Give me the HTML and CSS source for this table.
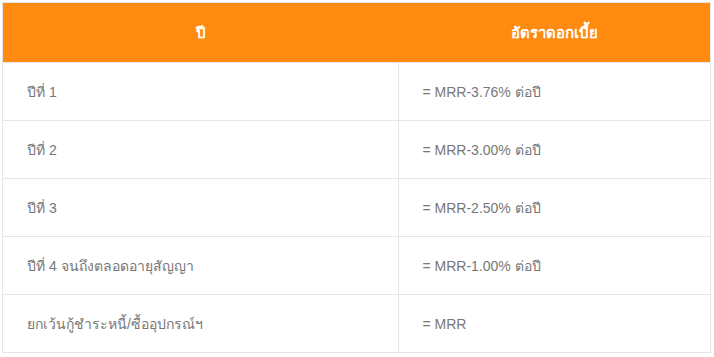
FILE: index.html
```html
<!DOCTYPE html>
<html lang="th">
<head>
<meta charset="utf-8">
<link rel="stylesheet" href="styles.css">
</head>
<body>
<table class="rate-table">
  <thead>
    <tr><th class="col-year">ปี</th><th class="col-rate">อัตราดอกเบี้ย</th></tr>
  </thead>
  <tbody>
    <tr><td>ปีที่ 1</td><td>= MRR-3.76% ต่อปี</td></tr>
    <tr><td>ปีที่ 2</td><td>= MRR-3.00% ต่อปี</td></tr>
    <tr><td>ปีที่ 3</td><td>= MRR-2.50% ต่อปี</td></tr>
    <tr><td>ปีที่ 4 จนถึงตลอดอายุสัญญา</td><td>= MRR-1.00% ต่อปี</td></tr>
    <tr><td>ยกเว้นกู้ชำระหนี้/ซื้ออุปกรณ์ฯ</td><td>= MRR</td></tr>
  </tbody>
</table>
</body>
</html>
```
FILE: styles.css
```css
html, body {
  margin: 0;
  padding: 0;
  background: #ffffff;
}
body {
  padding: 2px 3px 0 2px;
  font-family: "Liberation Sans", Tahoma, "Noto Sans", sans-serif;
}
.rate-table {
  width: 709px;
  border-collapse: collapse;
  border: 1px solid #e6e6e6;
  table-layout: fixed;
}
.rate-table th {
  background: #ff8a10;
  color: #ffffff;
  font-weight: bold;
  font-size: 15px;
  height: 59px;
  padding: 0;
  text-align: center;
  border: 0;
}
.col-year { width: 395px; }
.rate-table td {
  height: 57px;
  padding: 0 0 0 24px;
  font-size: 14px;
  color: #777777;
  border: 1px solid #e6e6e6;
  vertical-align: middle;
}
```
